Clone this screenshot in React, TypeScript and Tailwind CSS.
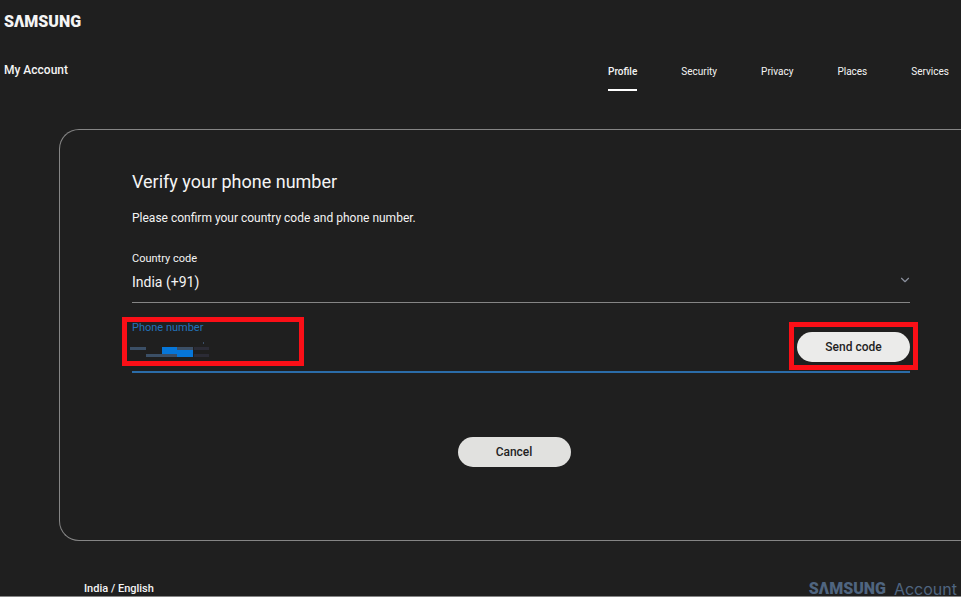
import { ChevronDown } from "lucide-react";

const NAV_ITEMS = [
  { label: "Profile", active: true },
  { label: "Security", active: false },
  { label: "Privacy", active: false },
  { label: "Places", active: false },
  { label: "Services", active: false },
];

function Header() {
  return (
    <header className="pt-3 pl-1 pr-3">
      <a href="#home" aria-label="SAMSUNG" className="block w-fit text-base leading-5 font-black">
        SΛMSUNG
      </a>
      <div className="mt-[26px] flex items-start justify-between">
        <a href="#account" className="mt-0.5 text-xs leading-5 font-medium">
          My Account
        </a>
        <nav className="flex gap-11 text-[10px] leading-5">
          {NAV_ITEMS.map((item) => (
            <a
              key={item.label}
              href={`#${item.label.toLowerCase()}`}
              className={`block border-b-2 pt-1 pb-[7px] ${item.active ? "border-white font-medium" : "border-transparent"}`}
            >
              {item.label}
            </a>
          ))}
        </nav>
      </div>
    </header>
  );
}

// Blocked out digits of the phone number
function HiddenNumber() {
  return (
    <svg className="pointer-events-none absolute top-[21px] -left-0.5" width="80" height="18" viewBox="0 0 80 18" shapeRendering="crispEdges" aria-hidden="true">
      <rect x="0" y="7" width="16" height="3" fill="#3b4f66" />
      <rect x="16" y="14" width="32" height="3" fill="#3b4f66" />
      <rect x="47" y="7" width="16" height="3" fill="#3b4f66" />
      <rect x="32" y="7" width="15" height="7" fill="#0676d8" />
      <rect x="47" y="10" width="16" height="7" fill="#0676d8" />
      <rect x="64" y="7" width="15" height="3" fill="#2b2b35" />
      <rect x="64" y="14" width="15" height="3" fill="#2b2b35" />
      <rect x="73" y="2" width="1" height="2" fill="#3b4f66" />
    </svg>
  );
}

function VerifyForm() {
  return (
    <form className="ml-[59px] rounded-l-[20px] border border-r-0 border-[#858585] pt-10 pr-[51px] pb-[73px] pl-[72px]" onSubmit={(e) => e.preventDefault()}>
      <h1 className="text-lg leading-6">Verify your phone number</h1>
      <p className="mt-3 text-xs leading-6">Please confirm your country code and phone number.</p>

      <div className="relative mt-5 border-b border-[#858585] pb-2">
        <label htmlFor="country" className="block text-[11px] leading-[18px]">
          Country code
        </label>
        <select id="country" defaultValue="91" className="mt-0.5 block h-6 w-full appearance-none bg-transparent text-sm leading-6 outline-none">
          <option value="91">India (+91)</option>
        </select>
        <ChevronDown className="pointer-events-none absolute -right-0.5 bottom-[15px] size-3.5 text-[#8a8f9c]" />
      </div>

      <div className="relative mt-4 flex justify-between border-b-2 border-[#2b6ca8] pb-[9px]">
        <div className="relative flex-1">
          <label htmlFor="phone" className="block text-[11px] leading-[18px] text-[#2272b9]">
            Phone number
          </label>
          <input id="phone" type="tel" className="block h-[25px] w-full bg-transparent text-sm outline-none" />
          <HiddenNumber />
          <div className="pointer-events-none absolute -top-0.5 -left-2.5 h-[49px] w-[182px] border-[5px] border-[#fa0f17]" />
        </div>
        <div className="relative self-end">
          <button type="submit" className="block h-[30px] w-[113px] rounded-full bg-[#ebebea] text-xs font-medium text-[#1f1f1f]">
            Send code
          </button>
          <div className="pointer-events-none absolute -inset-x-2 -top-2.5 -bottom-2 border-[5px] border-[#fa0f17]" />
        </div>
      </div>

      <div className="mt-16 flex justify-center pr-3.5">
        <button type="button" className="h-[30px] w-[113px] rounded-full bg-[#e1e1df] text-xs font-medium text-[#1f1f1f]">
          Cancel
        </button>
      </div>
    </form>
  );
}

function Footer() {
  return (
    <footer className="mt-[41px] flex justify-between border-b border-[#858585] pr-1 pl-[84px] leading-[14px]">
      <a href="#region" className="text-[11px] leading-[14px] font-medium">
        India / English
      </a>
      <div className="flex gap-2 text-base leading-[14px] text-[#4f6580]">
        <span aria-label="SAMSUNG" className="font-black">
          SΛMSUNG
        </span>
        <span className="font-[Inter,sans-serif]">Account</span>
      </div>
    </footer>
  );
}

export default function App() {
  return (
    <div className="min-h-screen bg-[#1f1f1f] font-[Roboto,sans-serif] text-[#f4f4f4]">
      <Header />
      <main className="mt-[38px]">
        <VerifyForm />
      </main>
      <Footer />
    </div>
  );
}
